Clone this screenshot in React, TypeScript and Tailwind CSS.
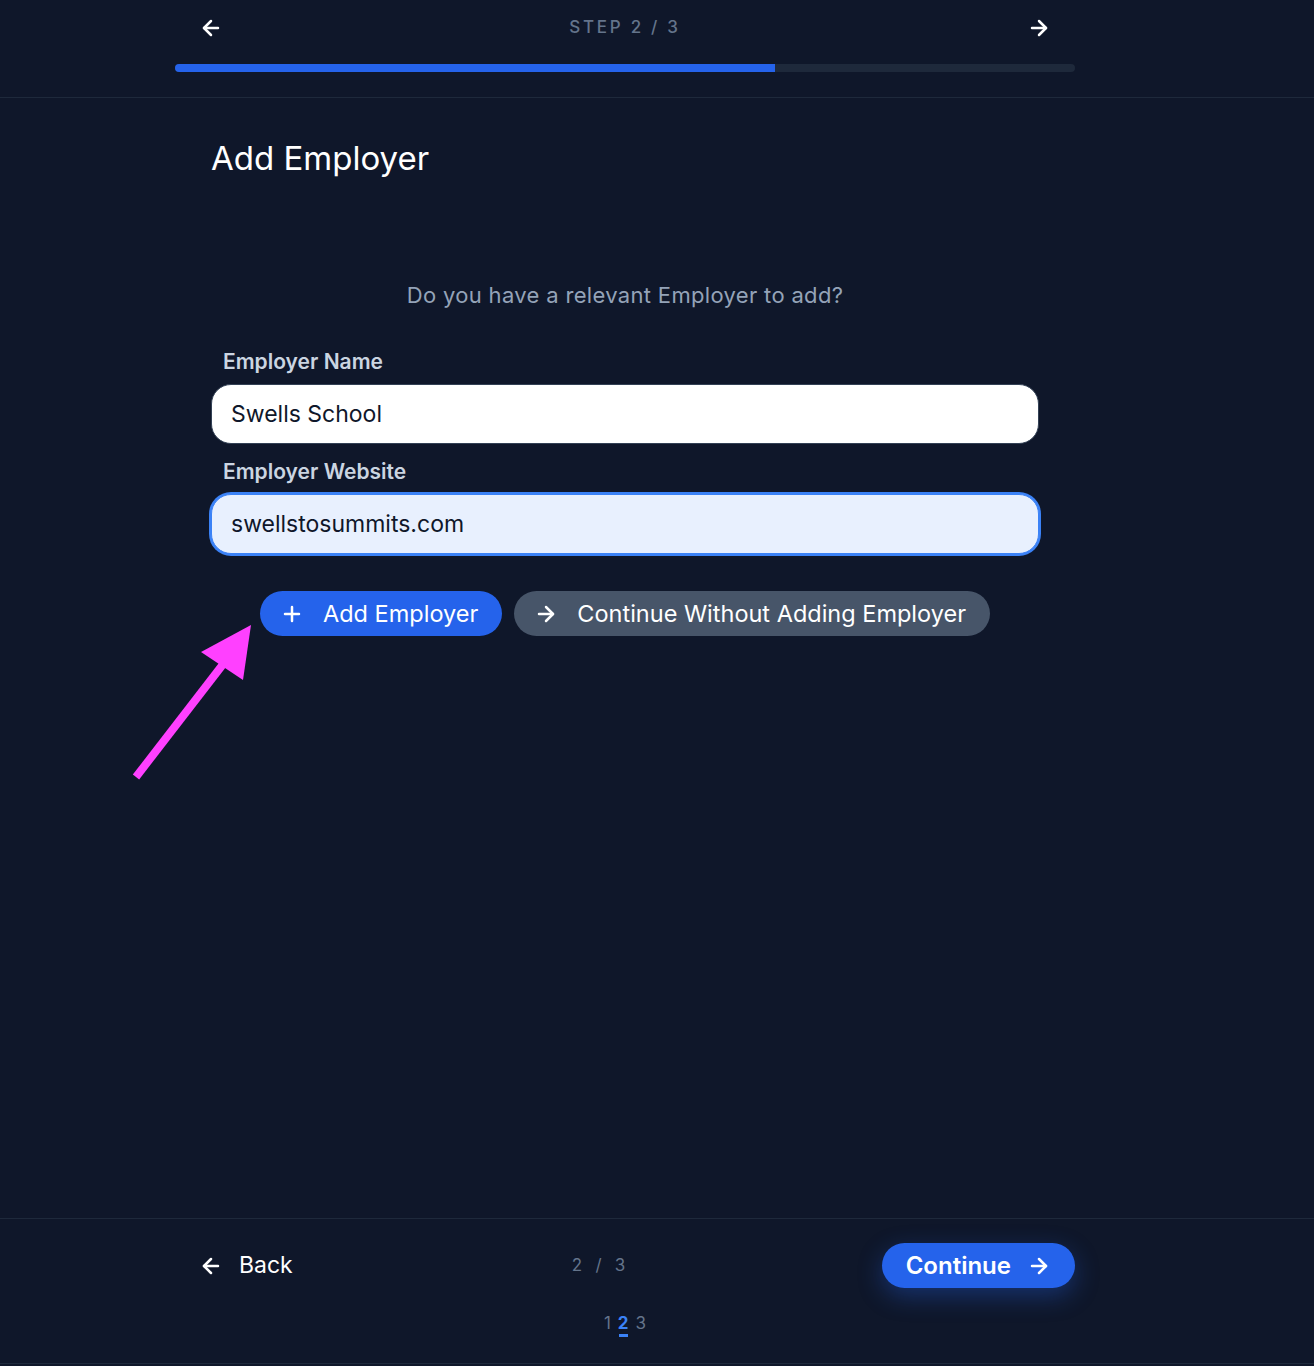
import { ArrowLeft, ArrowRight, Plus } from 'lucide-react';

const font = { fontFamily: 'Inter, "Noto Sans", sans-serif' };

export default function App() {
    return (
        <div
            className="relative flex h-[1366px] w-full flex-col bg-[#0f172a] pb-[2px] text-white"
            style={font}
        >
            {/* Header */}
            <div className="border-b border-[#1e293b] pb-[25px]">
                <div className="mx-auto w-[900px] -translate-x-[32px]">
                    <div className="flex h-14 items-center justify-between">
                        <button className="px-6 text-white">
                            <ArrowLeft className="h-6 w-6" strokeWidth={2.5} />
                        </button>
                        <div className="text-[17px] font-medium tracking-[0.16em] text-[#64748b]">
                            STEP 2 / 3
                        </div>
                        <button className="px-6 text-white">
                            <ArrowRight className="h-6 w-6" strokeWidth={2.5} />
                        </button>
                    </div>
                    <div className="mt-2 h-2 w-full overflow-hidden rounded-full bg-[#1e293b]">
                        <div className="h-full w-2/3 bg-[#2563eb]" />
                    </div>
                </div>
            </div>

            {/* Main */}
            <div className="flex-1">
                <div className="mx-auto w-[828px] -translate-x-[32px] pt-[40px]">
                    <h1 className="text-[33px] leading-[40px] font-normal text-white">
                        Add Employer
                    </h1>
                    <p className="mt-[103px] text-center text-[22px] leading-[28px] tracking-[0.015em] text-[#94a3b8]">
                        Do you have a relevant Employer to add?
                    </p>

                    <div className="mt-[39px]">
                        <label className="block px-3 text-[21px] leading-[28px] font-semibold text-[#cbd5e1]">
                            Employer Name
                        </label>
                        <input
                            type="text"
                            defaultValue="Swells School"
                            className="mt-2 h-[60px] w-full rounded-[20px] border border-[#334155] bg-white px-[19px] text-[23px] text-[#0f172a] outline-none"
                        />
                    </div>

                    <div className="mt-[14px]">
                        <label className="block px-3 text-[21px] leading-[28px] font-semibold text-[#cbd5e1]">
                            Employer Website
                        </label>
                        <input
                            type="text"
                            defaultValue="swellstosummits.com"
                            className="mt-2 h-[60px] w-full rounded-[20px] border border-[#3b82f6] bg-[#e8f0fe] px-[19px] text-[23px] text-[#0f172a] ring-2 ring-[#3b82f6] outline-none"
                        />
                    </div>

                    <div className="mt-[37px] flex justify-center gap-3">
                        <button className="flex h-[45px] items-center gap-[19px] rounded-full bg-[#2563eb] pr-6 pl-5 text-[23.5px] text-white">
                            <Plus className="h-6 w-6" strokeWidth={2.5} />
                            Add Employer
                        </button>
                        <button className="flex h-[45px] items-center gap-[19px] rounded-full bg-[#475569] pr-6 pl-5 text-[23.5px] text-white">
                            <ArrowRight className="h-6 w-6" strokeWidth={2.5} />
                            Continue Without Adding Employer
                        </button>
                    </div>
                </div>
            </div>

            {/* Footer */}
            <div className="border-t border-b border-[#1e293b] pt-6 pb-[26px]">
                <div className="mx-auto w-[900px] -translate-x-[32px]">
                    <div className="flex h-[45px] items-center justify-between">
                        <button className="flex items-center gap-4 px-6 text-[23px] text-white">
                            <ArrowLeft className="h-6 w-6" strokeWidth={2.5} />
                            Back
                        </button>
                        <div className="pl-[3px] text-[17px] tracking-[0.25em] text-[#64748b]">
                            2 / 3
                        </div>
                        <button className="flex h-[45px] items-center gap-4 rounded-full bg-[#2563eb] pr-6 pl-6 text-[24px] font-semibold text-white shadow-[0_8px_24px_rgba(37,99,235,0.35)]">
                            Continue
                            <ArrowRight className="h-6 w-6" strokeWidth={2.5} />
                        </button>
                    </div>
                    <div className="mt-[25px] flex justify-center gap-[7px] text-[17px] leading-[20px]">
                        <span className="text-[#64748b]">1</span>
                        <span className="flex flex-col items-center font-bold text-[#3b82f6]">
                            2
                            <span className="mt-[1px] h-[3px] w-[9px] bg-[#3b82f6]" />
                        </span>
                        <span className="text-[#64748b]">3</span>
                    </div>
                </div>
            </div>

            {/* Annotation arrow */}
            <svg
                className="pointer-events-none absolute top-0 left-0"
                width="1314"
                height="1366"
            >
                <line
                    x1="136"
                    y1="777"
                    x2="224"
                    y2="663"
                    stroke="#ff40ff"
                    strokeWidth="8"
                />
                <polygon points="251,625 201,652 243,680" fill="#ff40ff" />
            </svg>
        </div>
    );
}
